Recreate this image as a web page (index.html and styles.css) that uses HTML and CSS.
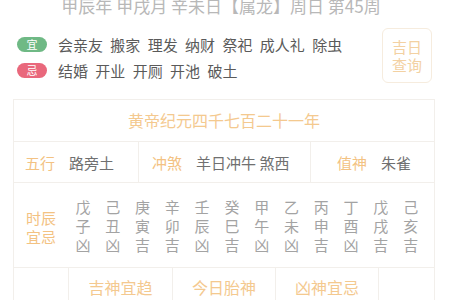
FILE: index.html
```html
<!DOCTYPE html>
<html lang="zh">
<head>
<meta charset="utf-8">
<link rel="stylesheet" href="styles.css">
</head>
<body>
<div class="page">
  <div class="date">甲辰年 甲戌月 辛未日【属龙】周日 第45周</div>
  <div class="top">
    <div class="yiji">
      <div class="line"><span class="badge yi">宜</span><span class="items">会亲友 搬家 理发 纳财 祭祀 成人礼 除虫</span></div>
      <div class="line"><span class="badge ji">忌</span><span class="items">结婚 开业 开厕 开池 破土</span></div>
    </div>
    <div class="query">吉日<br>查询</div>
  </div>
  <div class="table">
    <div class="era">黄帝纪元四千七百二十一年</div>
    <div class="info">
      <div class="cell c1"><span class="lab">五行</span><span class="val">路旁土</span></div>
      <div class="cell c2"><span class="lab">冲煞</span><span class="val">羊日冲牛 煞西</span></div>
      <div class="cell c3"><span class="lab">值神</span><span class="val">朱雀</span></div>
    </div>
    <div class="hours">
      <div class="hlab">时辰<br>宜忌</div>
      <div class="hgrid">
        <div class="hcol"><span>戊</span><span>子</span><span>凶</span></div>
        <div class="hcol"><span>己</span><span>丑</span><span>凶</span></div>
        <div class="hcol"><span>庚</span><span>寅</span><span>吉</span></div>
        <div class="hcol"><span>辛</span><span>卯</span><span>吉</span></div>
        <div class="hcol"><span>壬</span><span>辰</span><span>凶</span></div>
        <div class="hcol"><span>癸</span><span>巳</span><span>吉</span></div>
        <div class="hcol"><span>甲</span><span>午</span><span>凶</span></div>
        <div class="hcol"><span>乙</span><span>未</span><span>凶</span></div>
        <div class="hcol"><span>丙</span><span>申</span><span>吉</span></div>
        <div class="hcol"><span>丁</span><span>酉</span><span>凶</span></div>
        <div class="hcol"><span>戊</span><span>戌</span><span>吉</span></div>
        <div class="hcol"><span>己</span><span>亥</span><span>吉</span></div>
      </div>
    </div>
    <div class="gods">
      <div class="side lab">彭祖</div>
      <div class="head">吉神宜趋</div>
      <div class="head">今日胎神</div>
      <div class="head">凶神宜忌</div>
      <div class="side gray">百忌</div>
    </div>
  </div>
</div>
</body>
</html>
```
FILE: styles.css
```css
body {
  margin: 0;
  background: #fff;
  font-family: "Noto Sans CJK SC", "Noto Sans", sans-serif;
}
.page {
  width: 450px;
  height: 300px;
  overflow: hidden;
}
.date {
  margin-top: -6px;
  height: 24px;
  line-height: 24px;
  font-size: 17px;
  color: #b8b8b8;
  text-align: center;
  padding-right: 8px;
  white-space: nowrap;
}
.top {
  display: flex;
  justify-content: space-between;
  margin: 10px 18px 0 17px;
}
.yiji {
  padding-top: 3px;
}
.line {
  display: flex;
  align-items: center;
  height: 26px;
  font-size: 15px;
  color: #5a5a5a;
  white-space: nowrap;
}
.items {
  word-spacing: 4px;
}
.badge {
  flex: none;
  width: 30px;
  height: 15px;
  border-radius: 8px;
  line-height: 15px;
  font-size: 11px;
  color: #fff;
  text-align: center;
  margin-right: 11px;
}
.yi { background: #6fb985; }
.ji { background: #e9687c; }
.query {
  width: 50px;
  height: 55px;
  box-sizing: border-box;
  border: 1px solid #f6ecde;
  border-radius: 6px;
  color: #f3d1a2;
  font-size: 15px;
  line-height: 18px;
  display: flex;
  align-items: center;
  justify-content: center;
  text-align: center;
}
.table {
  margin: 16px 15px 0 13px;
  border: 1px solid #f2efeb;
  border-bottom: none;
}
.era {
  height: 41px;
  line-height: 41px;
  text-align: center;
  font-size: 16px;
  color: #f4c98f;
  border-bottom: 1px solid #f2efeb;
}
.info {
  display: grid;
  grid-template-columns: 125px 172px 1fr;
  height: 40px;
  border-bottom: 1px solid #f2efeb;
}
.cell {
  display: flex;
  align-items: center;
  gap: 14px;
  font-size: 15px;
  white-space: nowrap;
  border-right: 1px solid #f2efeb;
}
.c1 { padding-left: 11px; }
.c2 { padding-left: 13px; }
.c3 { padding-left: 26px; border-right: none; }
.lab { color: #f3c282; }
.val { color: #707070; }
.hours {
  display: flex;
  height: 84px;
  border-bottom: 1px solid #f2efeb;
}
.hlab {
  width: 54px;
  display: flex;
  align-items: center;
  justify-content: center;
  text-align: center;
  font-size: 15px;
  line-height: 19px;
  padding-top: 3px;
  color: #f3c282;
}
.hgrid {
  display: grid;
  grid-template-columns: repeat(12, 29.8px);
  align-content: center;
  padding-top: 1px;
}
.hcol {
  display: flex;
  flex-direction: column;
  align-items: center;
  font-size: 15px;
  line-height: 19px;
  color: #a3a3a3;
}
.gods {
  display: grid;
  grid-template-columns: 55px 104px 103px 103px 1fr;
  height: 80px;
}
.gods > div {
  border-right: 1px solid #f2efeb;
}
.gods > div:last-child { border-right: none; }
.head {
  height: 38px;
  display: flex;
  align-items: center;
  justify-content: center;
  font-size: 16px;
  color: #f4c98f;
}
.side {
  padding-top: 33px;
  text-align: center;
  font-size: 15px;
  line-height: 19px;
}
.gray { color: #a3a3a3; }
```
